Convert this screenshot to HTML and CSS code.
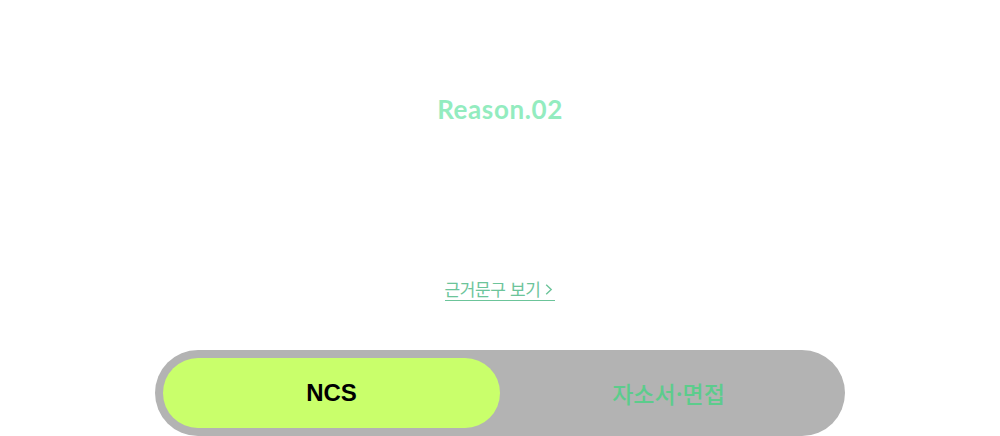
FILE: index.html
```html
<!DOCTYPE html>
<html lang="ko">
<head>
<meta charset="utf-8">
<link rel="stylesheet" href="styles.css">
</head>
<body>
<main class="reason">
  <h2 class="reason-title">Reason.02</h2>
  <a class="reason-link" href="#">근거문구 보기 <svg class="chev" width="8" height="11" viewBox="0 0 8 11"><path d="M1.2 0.8 L6.2 5.5 L1.2 10.2" fill="none" stroke="#6cc49a" stroke-width="1.4"/></svg></a>
  <div class="tabs">
    <button class="tab tab-active">NCS</button>
    <button class="tab">자소서·면접</button>
  </div>
</main>
</body>
</html>
```

FILE: styles.css
```css
html, body {
  margin: 0;
  padding: 0;
  background: #ffffff;
}
.reason {
  width: 1000px;
  height: 436px;
  overflow: hidden;
  display: flex;
  flex-direction: column;
  align-items: center;
  font-family: "Noto Sans CJK KR", "Noto Sans", sans-serif;
}
.reason-title {
  margin: 93px 0 0;
  height: 32px;
  line-height: 32px;
  font-family: "Lato", "Noto Sans", sans-serif;
  font-weight: 700;
  font-size: 26px;
  letter-spacing: 0.6px;
  color: #93ecbf;
}
.reason-link {
  margin-top: 153px;
  height: 22px;
  line-height: 22px;
  display: flex;
  align-items: center;
  gap: 5px;
  font-size: 17px;
  font-weight: 400;
  color: #6cc49a;
  text-decoration: none;
  border-bottom: 1px solid #6cc49a;
  padding: 0 2px 0 0;
  letter-spacing: -0.4px;
}
.chev {
  display: block;
  margin-top: 1px;
}
.tabs {
  margin-top: 49px;
  width: 690px;
  height: 86px;
  box-sizing: border-box;
  padding: 8px;
  background: #b3b3b3;
  border-radius: 43px;
  display: flex;
}
.tab {
  flex: 1;
  height: 70px;
  border: 0;
  border-radius: 35px;
  background: transparent;
  font-family: "Noto Sans CJK KR", sans-serif;
  font-size: 23px;
  font-weight: 500;
  color: #5ccc8c;
  padding: 0;
  letter-spacing: 0;
}
.tab-active {
  background: #c9ff6b;
  color: #000000;
  font-family: "Liberation Sans", Arial, sans-serif;
  font-weight: 700;
  font-size: 24px;
}
```
